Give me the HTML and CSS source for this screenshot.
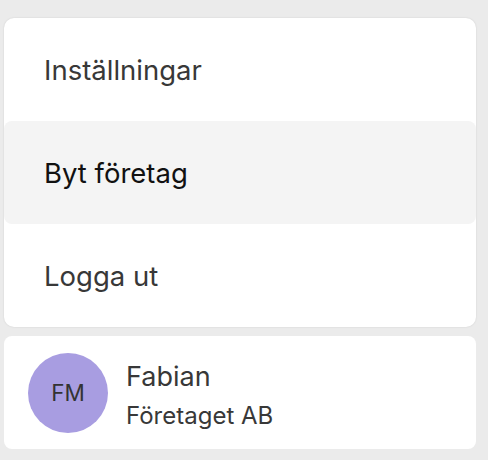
FILE: index.html
```html
<!DOCTYPE html>
<html lang="sv">
<head>
<meta charset="utf-8">
<link rel="stylesheet" href="styles.css">
</head>
<body>
<div class="panel">
  <nav class="menu">
    <div class="menu-item">Inställningar</div>
    <div class="menu-item active">Byt företag</div>
    <div class="menu-item">Logga ut</div>
  </nav>
  <div class="user">
    <div class="avatar">FM</div>
    <div class="user-info">
      <div class="user-name">Fabian</div>
      <div class="user-company">Företaget AB</div>
    </div>
  </div>
</div>
</body>
</html>
```
FILE: styles.css
```css
html, body {
  margin: 0;
  padding: 0;
  background: #ebebeb;
  font-family: Inter, "Noto Sans", sans-serif;
}
.panel {
  display: flex;
  flex-direction: column;
  gap: 9px;
  padding: 18px 12px 0 4px;
}
.menu {
  background: #fff;
  border-radius: 10px;
  box-shadow: 0 0 2px rgba(0, 0, 0, 0.12);
  display: flex;
  flex-direction: column;
}
.menu-item {
  height: 103px;
  display: flex;
  align-items: center;
  padding-left: 40px;
  padding-top: 1px;
  box-sizing: border-box;
  font-size: 27.5px;
  color: #383838;
  border-radius: 8px;
}
.menu-item.active {
  background: #f4f4f4;
  color: #111;
}
.user {
  background: #fff;
  border-radius: 8px;
  height: 113px;
  display: flex;
  align-items: center;
  padding-left: 24px;
  gap: 18px;
}
.avatar {
  width: 80px;
  height: 80px;
  border-radius: 50%;
  background: #a89de1;
  color: #333;
  font-size: 22.5px;
  display: flex;
  align-items: center;
  justify-content: center;
}
.user-info {
  display: flex;
  flex-direction: column;
  gap: 8px;
  padding-top: 7px;
}
.user-name {
  font-size: 27px;
  line-height: 1.2;
  color: #383838;
}
.user-company {
  font-size: 24px;
  line-height: 1.2;
  color: #383838;
}
```
